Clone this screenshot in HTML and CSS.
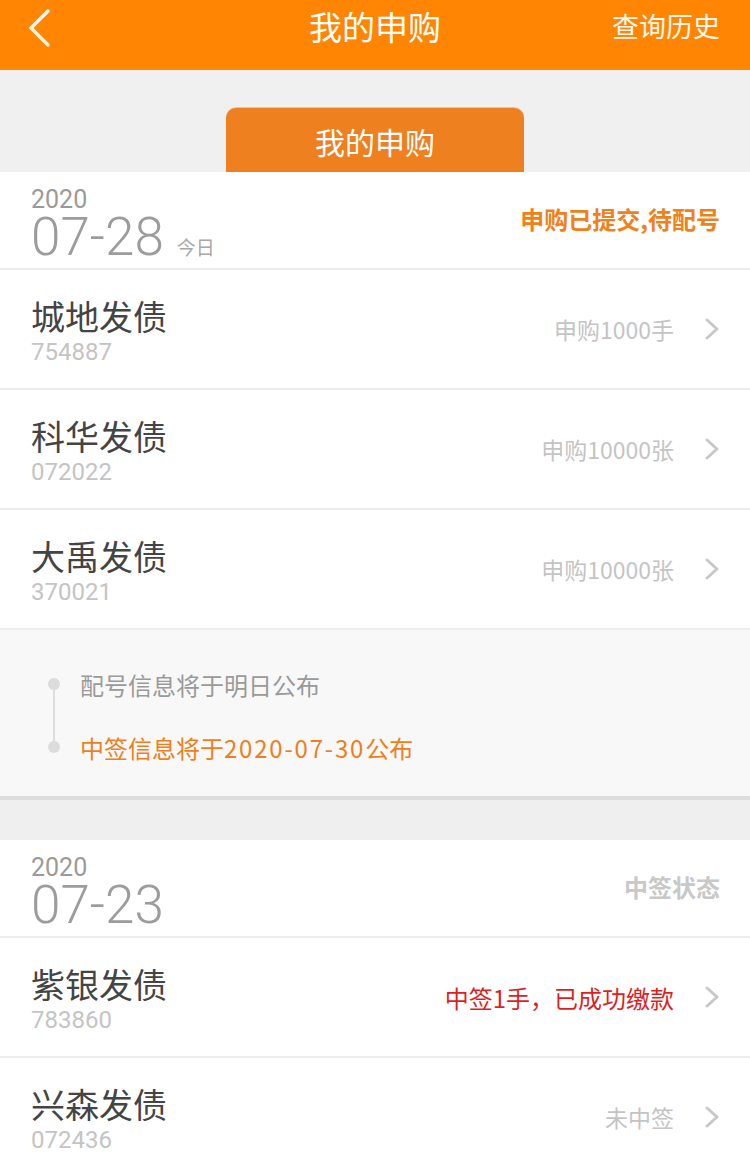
FILE: index.html
```html
<!DOCTYPE html>
<html lang="zh-CN">
<head>
<meta charset="utf-8">
<title>我的申购</title>
<link rel="stylesheet" href="styles.css">
</head>
<body>
<div class="page">
  <header class="topbar">
    <div class="back">
      <svg width="28" height="40" viewBox="0 0 28 40"><polyline points="22,3 5,20 22,37" fill="none" stroke="#fff6e6" stroke-width="3.5" stroke-linecap="round" stroke-linejoin="round"/></svg>
    </div>
    <div class="title">我的申购</div>
    <div class="history">查询历史</div>
  </header>

  <div class="tabband">
    <div class="tab">我的申购</div>
  </div>

  <section class="group">
    <div class="ghead">
      <div class="date">
        <div class="year">2020</div>
        <div class="md">07-28<span class="today">今日</span></div>
      </div>
      <div class="gstatus orange">申购已提交,待配号</div>
    </div>
    <div class="row">
      <div class="info"><div class="name">城地发债</div><div class="code">754887</div></div>
      <div class="right"><span class="rtext">申购1000手</span><span class="chev"><svg width="16" height="24" viewBox="0 0 16 24"><polyline points="3,3 13,12 3,21" fill="none" stroke="#c8c8c8" stroke-width="3" stroke-linecap="round" stroke-linejoin="round"/></svg></span></div>
    </div>
    <div class="row">
      <div class="info"><div class="name">科华发债</div><div class="code">072022</div></div>
      <div class="right"><span class="rtext">申购10000张</span><span class="chev"><svg width="16" height="24" viewBox="0 0 16 24"><polyline points="3,3 13,12 3,21" fill="none" stroke="#c8c8c8" stroke-width="3" stroke-linecap="round" stroke-linejoin="round"/></svg></span></div>
    </div>
    <div class="row">
      <div class="info"><div class="name">大禹发债</div><div class="code">370021</div></div>
      <div class="right"><span class="rtext">申购10000张</span><span class="chev"><svg width="16" height="24" viewBox="0 0 16 24"><polyline points="3,3 13,12 3,21" fill="none" stroke="#c8c8c8" stroke-width="3" stroke-linecap="round" stroke-linejoin="round"/></svg></span></div>
    </div>
    <div class="timeline">
      <div class="tl-item"><span class="dot"></span><span class="tl-text">配号信息将于明日公布</span></div>
      <div class="tl-item"><span class="dot"></span><span class="tl-text orange">中签信息将于<span class="num">2020-07-30</span>公布</span></div>
    </div>
  </section>

  <div class="spacer"></div>

  <section class="group">
    <div class="ghead">
      <div class="date">
        <div class="year">2020</div>
        <div class="md">07-23</div>
      </div>
      <div class="gstatus light">中签状态</div>
    </div>
    <div class="row">
      <div class="info"><div class="name">紫银发债</div><div class="code">783860</div></div>
      <div class="right"><span class="rtext red">中签1手，已成功缴款</span><span class="chev"><svg width="16" height="24" viewBox="0 0 16 24"><polyline points="3,3 13,12 3,21" fill="none" stroke="#c8c8c8" stroke-width="3" stroke-linecap="round" stroke-linejoin="round"/></svg></span></div>
    </div>
    <div class="row">
      <div class="info"><div class="name">兴森发债</div><div class="code">072436</div></div>
      <div class="right"><span class="rtext">未中签</span><span class="chev"><svg width="16" height="24" viewBox="0 0 16 24"><polyline points="3,3 13,12 3,21" fill="none" stroke="#c8c8c8" stroke-width="3" stroke-linecap="round" stroke-linejoin="round"/></svg></span></div>
    </div>
  </section>
</div>
</body>
</html>
```

FILE: styles.css
```css
* { box-sizing: border-box; }
html, body { margin: 0; padding: 0; }
body {
  width: 750px;
  height: 1176px;
  overflow: hidden;
  background: #efefef;
  font-family: "Noto Sans CJK SC", "Noto Sans", sans-serif;
  color: #333;
}
.page { width: 750px; }

.topbar {
  height: 70px;
  background: #ff8503;
  display: flex;
  align-items: flex-start;
  justify-content: space-between;
  padding: 0 30px 0 26px;
  color: #fff;
  position: relative;
}
.back { margin-top: 8px; height: 40px; width: 120px; }
.back svg { display: block; }
.title {
  position: absolute;
  left: 0; right: 0; top: 4px;
  text-align: center;
  font-size: 33px;
  line-height: 44px;
  pointer-events: none;
}
.history {
  margin-top: 7px;
  font-size: 27px;
  line-height: 38px;
  color: #fff8ee;
}

.tabband {
  height: 102px;
  background: #f0f0f0;
  display: flex;
  justify-content: center;
  align-items: flex-end;
}
.tab {
  width: 298px;
  height: 64px;
  background: #ee8020;
  border-radius: 10px 10px 0 0;
  color: #fff;
  font-size: 30px;
  line-height: 66px;
  text-align: center;
  box-shadow: 0 -1px 0 #f7c08a;
}

.group { background: #fff; }
.ghead {
  height: 98px;
  border-bottom: 2px solid #ededed;
  display: flex;
  justify-content: space-between;
  align-items: flex-start;
  padding: 0 30px 0 31px;
}
.date { display: flex; flex-direction: column; padding-top: 15px; }
.year {
  font-family: "Roboto", "Liberation Sans", sans-serif;
  font-size: 25px;
  line-height: 26px;
  color: #9a9a9a;
}
.md {
  font-family: "Roboto", "Liberation Sans", sans-serif;
  font-weight: 300;
  font-size: 53px;
  line-height: 44px;
  margin-top: 2px;
  color: #9c9c9c;
}
.today {
  font-family: "Noto Sans CJK SC", sans-serif;
  font-size: 19px;
  font-weight: 400;
  color: #a8a8a8;
  margin-left: 13px;
}
.gstatus {
  font-size: 24px;
  font-weight: 700;
  line-height: 30px;
  align-self: center;
  margin-top: -2px;
}
.gstatus.orange { color: #f0811a; }
.light { color: #c8c8c8; }

.row {
  height: 120px;
  border-bottom: 2px solid #ededed;
  display: flex;
  justify-content: space-between;
  align-items: center;
  padding: 0 30px 0 31px;
}
.info {
  display: flex;
  flex-direction: column;
  align-self: flex-start;
  padding-top: 27px;
}
.name {
  font-size: 34px;
  line-height: 38px;
  color: #444;
}
.code {
  font-family: "Roboto", "Liberation Sans", sans-serif;
  font-size: 24px;
  line-height: 26px;
  margin-top: 4px;
  color: #c4c4c4;
}
.right { display: flex; align-items: center; }
.rtext { font-size: 23px; color: #c4c4c4; }
.rtext.red { color: #dd1f1f; font-size: 24px; }
.chev { margin-left: 30px; display: flex; }
.chev svg { display: block; }

.timeline {
  background: #f8f8f8;
  height: 170px;
  border-bottom: 4px solid #dedede;
  padding: 39px 0 0 48px;
  position: relative;
}
.timeline::before {
  content: "";
  position: absolute;
  left: 53px;
  top: 52px;
  width: 2px;
  height: 66px;
  background: #dcdcdc;
}
.tl-item {
  display: flex;
  align-items: center;
  height: 30px;
  margin-bottom: 33px;
}
.dot {
  width: 12px; height: 12px;
  border-radius: 50%;
  background: #dcdcdc;
  position: relative;
  z-index: 1;
}
.tl-text {
  margin-left: 20px;
  font-size: 24px;
  color: #9a9a9a;
}
.tl-text.orange { color: #ee7f1c; }
.num { letter-spacing: 1.8px; }

.spacer { height: 40px; background: #efefef; }
```
